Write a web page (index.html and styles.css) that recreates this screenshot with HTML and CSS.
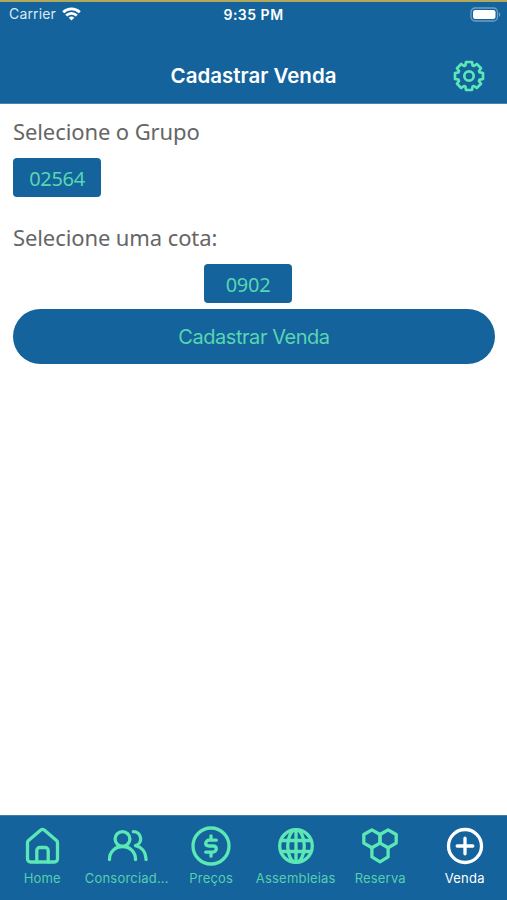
FILE: index.html
```html
<!DOCTYPE html>
<html lang="pt-BR">
<head>
  <meta charset="UTF-8" />
  <meta name="viewport" content="width=device-width, initial-scale=1.0"/>
  <title>Cadastrar Venda</title>
  <link rel="stylesheet" href="styles.css">
</head>
<body>
  <header class="header">
    <div class="status-bar">
      <div class="carrier">
        <span>Carrier</span>
        <svg width="19" height="14" viewBox="0 0 19 14" fill="none" stroke="#fff" stroke-width="2.8">
          <path d="M1.2 5.2a12 12 0 0 1 16.6 0"/>
          <path d="M4.2 8.5a7.7 7.7 0 0 1 10.6 0"/>
          <path d="M9.5 13.5 6.7 10.7a4.2 4.2 0 0 1 5.6 0z" fill="#fff" stroke="none"/>
        </svg>
      </div>
      <span class="time">9:35 PM</span>
      <svg class="battery" width="31" height="15" viewBox="0 0 31 15">
        <rect x="1" y="1" width="26.5" height="13" rx="4" fill="none" stroke="#6f9fc5" stroke-width="1.3"/>
        <rect x="3" y="3" width="22.5" height="9" rx="2.2" fill="#fff"/>
        <path d="M29 5.3c1.8.8 1.8 3.6 0 4.4z" fill="#6f9fc5"/>
      </svg>
    </div>
    <div class="nav-bar">
      <h1 class="title">Cadastrar Venda</h1>
      <button class="settings-btn" type="button" aria-label="Configurações">
        <svg class="icon" width="32" height="32" viewBox="0 0 32 32">
          <path d="M13 2h6l.6 3.4 1.4.6 2.8-2L28 8.2 26 11l.6 1.4 3.4.6v6l-3.4.6L26 21l2 2.800-4.200 4.200-2.800-2-1.400.6L19 30h-6l-.6-3.400L11 26l-2.800 2L4 23.800 6 21l-.6-1.400L2 19v-6l3.400-.6L6 11 4 8.200 8.200 4 11 6l1.400-.6z"/>
          <circle cx="16" cy="16" r="4.700"/>
        </svg>
      </button>
    </div>
  </header>

  <main class="content">
    <p class="label">Selecione o Grupo</p>
    <button class="option" type="button">02564</button>
    <p class="label label-cota">Selecione uma cota:</p>
    <button class="option option-cota" type="button">0902</button>
    <button class="submit-btn" type="button">Cadastrar Venda</button>
  </main>

  <nav class="tab-bar">
    <a class="tab">
      <svg class="icon" width="42" height="42" viewBox="0 0 42 42">
        <path d="M19.800 5.100a2.600 2.600 0 0 1 3.400 0L35.500 15.500a3 3 0 0 1 1 2.200V34a3 3 0 0 1-3 3h-24a3 3 0 0 1-3-3V17.700a3 3 0 0 1 1-2.200z"/>
        <path d="M15.800 37V25.500a3 3 0 0 1 3-3h5.400a3 3 0 0 1 3 3V37"/>
      </svg>
      <span>Home</span>
    </a>
    <a class="tab">
      <svg class="icon" width="42" height="42" viewBox="0 0 42 42">
        <circle cx="16.500" cy="14" r="7.400"/>
        <path d="M3.500 34.500v-.5a13 12.500 0 0 1 26 0v.5"/>
        <path d="M27.300 6.600a7.200 7.200 0 0 1 2.200 14.100c6 1.300 10.200 6.300 10.500 12.800v1"/>
      </svg>
      <span>Consorciad...</span>
    </a>
    <a class="tab">
      <svg class="icon" width="42" height="42" viewBox="0 0 42 42">
        <circle cx="21" cy="21" r="18"/>
        <path d="M26.300 15.200H19a3.300 3.300 0 0 0-3.300 3.100c0 1.800 1.500 2.700 3.300 2.700h4c1.800 0 3.300 1 3.300 2.900a3.300 3.300 0 0 1-3.300 3.200h-7.300M21 15V10.800M21 31.200V27"/>
      </svg>
      <span>Preços</span>
    </a>
    <a class="tab">
      <svg class="icon" width="42" height="42" viewBox="0 0 42 42">
        <circle cx="21" cy="21" r="16.300"/>
        <ellipse cx="21" cy="21" rx="8.300" ry="16.300"/>
        <path d="M21 4.700v32.600M6.500 15.500h29M6.500 26.500h29"/>
      </svg>
      <span>Assembleias</span>
    </a>
    <a class="tab">
      <svg class="icon" width="42" height="42" viewBox="0 0 42 42">
        <path d="M12.900 4.900 21 9.500v8.600l-8.100 4.700-8.100-4.700V9.500z"/>
        <path d="M29.100 4.900l8.100 4.600v8.600l-8.100 4.700-8.100-4.700V9.500z"/>
        <path d="M12.900 22.800v9.100l8.100 4.900 8.100-4.900v-9.100"/>
      </svg>
      <span>Reserva</span>
    </a>
    <a class="tab active">
      <svg class="icon" width="42" height="42" viewBox="0 0 42 42">
        <circle cx="21" cy="21" r="16.500"/>
        <path d="M21 13.200v15.600M13.200 21h15.600"/>
      </svg>
      <span>Venda</span>
    </a>
  </nav>
</body>
</html>
```

FILE: styles.css
```css
* {
  box-sizing: border-box;
}
body {
  margin: 0;
  height: 100vh;
  display: flex;
  flex-direction: column;
  background: #fff;
  font-family: "Inter", "Liberation Sans", sans-serif;
}
button {
  border: none;
  padding: 0;
  cursor: pointer;
}
.icon {
  display: block;
  fill: none;
  stroke: currentColor;
  stroke-width: 3.3;
  stroke-linecap: round;
  stroke-linejoin: round;
}

/* header */
.header {
  height: 104px;
  background: #14639c;
  border-top: 2px solid #b2a85c;
  border-bottom: 1px solid #4d84ad;
  color: #fff;
}
.status-bar {
  height: 24px;
  padding: 0 6px 0 9px;
  display: grid;
  grid-template-columns: 1fr auto 1fr;
  align-items: center;
  font-size: 14px;
}
.carrier {
  display: flex;
  align-items: center;
  gap: 6px;
  letter-spacing: 0.15px;
  color: #dce9f3;
}
.carrier span {
  margin-top: -1px;
}
.time {
  margin-right: 3px;
  font-weight: 600;
  font-size: 14px;
  letter-spacing: 0.5px;
}
.battery {
  justify-self: end;
}
.nav-bar {
  height: 56px;
  margin-top: 22px;
  padding: 5px 22px 0;
  display: grid;
  grid-template-columns: 32px 1fr 32px;
}
.title {
  grid-column: 2;
  margin: 0;
  text-align: center;
  font-size: 20.5px;
  line-height: 46px;
  font-weight: 600;
}
.settings-btn {
  align-self: start;
  margin-top: 7px;
  background: none;
  color: #5ce8b5;
}
.settings-btn .icon {
  stroke-width: 2.7;
}

/* form */
.content {
  flex: 1;
  padding: 12px 12px 0 13px;
  display: flex;
  flex-direction: column;
  align-items: flex-start;
}
.label {
  margin: 0 0 12px;
  font-family: "Noto Sans", sans-serif;
  font-size: 22px;
  line-height: 30px;
  letter-spacing: -0.1px;
  color: #666;
}
.label-cota {
  margin-top: 25px;
}
.option {
  width: 88px;
  height: 39px;
  padding-top: 1px;
  border-radius: 4px;
  background: #14639c;
  color: #57d6b1;
  font-family: "Noto Sans", sans-serif;
  font-size: 20px;
  letter-spacing: -0.3px;
}
.option-cota {
  margin-left: 191px;
}
.submit-btn {
  width: 100%;
  height: 55px;
  margin-top: 6px;
  border-radius: 28px;
  background: #14639c;
  color: #57d6b1;
  font-family: "Inter", sans-serif;
  font-size: 20px;
  letter-spacing: -0.45px;
}

/* tabs */
.tab-bar {
  height: 85px;
  padding-top: 9px;
  display: grid;
  grid-template-columns: repeat(6, minmax(0, 1fr));
  background: #14639c;
  border-top: 1px solid #3f7bab;
}
.tab {
  display: flex;
  flex-direction: column;
  align-items: center;
  gap: 3px;
  color: #5ce8b5;
  font-size: 13px;
  line-height: 16px;
  letter-spacing: 0.2px;
}
.tab span {
  color: #54cfb0;
  white-space: nowrap;
}
.tab.active,
.tab.active span {
  color: #fff;
}
```
